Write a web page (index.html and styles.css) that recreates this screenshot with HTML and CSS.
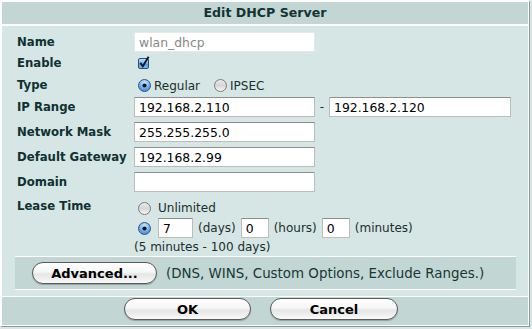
FILE: index.html
```html
<!DOCTYPE html>
<html>
<head>
<meta charset="utf-8">
<title>Edit DHCP Server</title>
<link rel="stylesheet" href="styles.css">
</head>
<body>
<div class="panel">
  <div class="head">Edit DHCP Server</div>
  <div class="main">
    <div class="form">
      <div class="lbl r-in">Name</div>
      <div class="ctl"><input class="field f-name" type="text" value="wlan_dhcp" disabled></div>

      <div class="lbl r-en">Enable</div>
      <div class="ctl ctl-en">
        <svg class="cb" width="12" height="13" viewBox="0 0 12 13">
          <defs><linearGradient id="cbg" x1="0" y1="0" x2="0" y2="1"><stop offset="0" stop-color="#c4e2fb"/><stop offset=".5" stop-color="#79b6ef"/><stop offset=".55" stop-color="#4f97e4"/><stop offset="1" stop-color="#7cc0f5"/></linearGradient></defs>
          <rect x="0.5" y="2.5" width="10" height="10" rx="1.5" fill="url(#cbg)" stroke="#2e4d78"/>
          <path d="M2.3 6.8 L4.8 10.3 L10.6 0.8" fill="none" stroke="#0e1a2a" stroke-width="1.9"/>
        </svg>
      </div>

      <div class="lbl r-ty">Type</div>
      <div class="ctl ctl-ty">
        <span class="opt">
          <svg class="rd" width="13" height="13" viewBox="0 0 13 13">
            <defs><radialGradient id="rsel" cx=".5" cy=".3" r=".7"><stop offset="0" stop-color="#d4ecff"/><stop offset=".6" stop-color="#6fb0ee"/><stop offset="1" stop-color="#3c86d9"/></radialGradient></defs>
            <circle cx="6.5" cy="6.5" r="6" fill="url(#rsel)" stroke="#3a5782"/>
            <circle cx="6.5" cy="6.5" r="2.1" fill="#111"/>
          </svg>Regular</span>
        <span class="opt">
          <svg class="rd" width="13" height="13" viewBox="0 0 13 13">
            <defs><linearGradient id="roff" x1="0" y1="0" x2="0" y2="1"><stop offset="0" stop-color="#ececec"/><stop offset=".5" stop-color="#d6d6d6"/><stop offset="1" stop-color="#fafafa"/></linearGradient></defs>
            <circle cx="6.5" cy="6.5" r="6" fill="url(#roff)" stroke="#7a7a7a"/>
          </svg>IPSEC</span>
      </div>

      <div class="lbl r-in">IP Range</div>
      <div class="ctl ctl-ip">
        <input class="field f-w" type="text" value="192.168.2.110">
        <span class="dash">-</span>
        <input class="field f-ip2" type="text" value="192.168.2.120">
      </div>

      <div class="lbl r-in">Network Mask</div>
      <div class="ctl"><input class="field f-w" type="text" value="255.255.255.0"></div>

      <div class="lbl r-in">Default Gateway</div>
      <div class="ctl"><input class="field f-w" type="text" value="192.168.2.99"></div>

      <div class="lbl r-in">Domain</div>
      <div class="ctl"><input class="field f-w" type="text" value=""></div>

      <div class="lbl r-lt">Lease Time</div>
      <div class="ctl ctl-lt">
        <span class="opt">
          <svg class="rd" width="13" height="13" viewBox="0 0 13 13">
            <defs><linearGradient id="roff2" x1="0" y1="0" x2="0" y2="1"><stop offset="0" stop-color="#ececec"/><stop offset=".5" stop-color="#d6d6d6"/><stop offset="1" stop-color="#fafafa"/></linearGradient></defs>
            <circle cx="6.5" cy="6.5" r="6" fill="url(#roff2)" stroke="#7a7a7a"/>
          </svg>Unlimited</span>
      </div>

      <div class="lbl"></div>
      <div class="ctl ctl-dur">
        <svg class="rd rd-dur" width="13" height="13" viewBox="0 0 13 13">
          <defs><radialGradient id="rsel2" cx=".5" cy=".3" r=".7"><stop offset="0" stop-color="#d4ecff"/><stop offset=".6" stop-color="#6fb0ee"/><stop offset="1" stop-color="#3c86d9"/></radialGradient></defs>
          <circle cx="6.5" cy="6.5" r="6" fill="url(#rsel2)" stroke="#3a5782"/>
          <circle cx="6.5" cy="6.5" r="2.1" fill="#111"/>
        </svg>
        <input class="field f-days" type="text" value="7">
        <span class="unit">(days)</span>
        <input class="field f-small" type="text" value="0">
        <span class="unit">(hours)</span>
        <input class="field f-small" type="text" value="0">
        <span class="unit">(minutes)</span>
      </div>

      <div class="lbl"></div>
      <div class="ctl note">(5 minutes - 100 days)</div>
    </div>

    <div class="adv">
      <button class="btn btn-adv" type="button">Advanced...</button>
      <span class="adv-text">(DNS, WINS, Custom Options, Exclude Ranges.)</span>
    </div>
  </div>
  <div class="foot">
    <button class="btn btn-ok" type="button">OK</button>
    <button class="btn btn-cancel" type="button">Cancel</button>
  </div>
</div>
</body>
</html>
```

FILE: styles.css
```css
html, body {
  margin: 0;
  padding: 0;
}
body {
  background: #d6e6e4;
  font-family: "DejaVu Sans", Verdana, sans-serif;
  color: #173636;
}
.panel {
  width: 526px;
  background: #ffffff;
  border-left: 2px solid #ffffff;
  border-top: 2px solid #ffffff;
  border-right: 1px solid #8f948f;
  border-bottom: 1px solid #8f948f;
  padding: 0 1px 1px 0;
}
.head {
  height: 22px;
  line-height: 22px;
  background: #c2d6d3;
  text-align: center;
  font-weight: bold;
  font-size: 12.6px;
  color: #123434;
}
.main {
  margin-top: 2px;
  height: 264px;
  padding: 6px 12px 0 13px;
  background: #d6e6e4;
}
.form {
  display: grid;
  grid-template-columns: 117px 1fr;
  grid-template-rows: 20px 22px 23px 25px 25px 25px 25px 21px 20px 18px;
  padding-left: 2px;
}
.lbl {
  font-weight: bold;
  font-size: 11.7px;
  color: #0f3131;
  white-space: nowrap;
}
.r-in { line-height: 20px; }
.r-en { line-height: 22px; }
.r-ty { line-height: 23px; }
.r-lt { line-height: 17px; padding-top: 1px; }
.ctl {
  display: flex;
  align-items: flex-start;
  font-size: 12px;
}
.ctl-en, .ctl-ty, .ctl-lt {
  align-items: center;
}
.ctl-en { padding-left: 4px; }
.ctl-ty { padding-left: 4px; gap: 14px; }
.ctl-lt { padding-left: 4px; padding-top: 1px; }
.opt {
  display: inline-flex;
  align-items: center;
  gap: 3px;
  color: #1a2e2e;
}
.ctl-lt .opt { gap: 7px; }
.cb { display: block; margin-top: -2px; }
.rd { display: block; flex: none; }
.field {
  box-sizing: border-box;
  height: 20px;
  margin: 0;
  padding: 0 4px;
  font-family: "DejaVu Sans", Verdana, sans-serif;
  font-size: 12.4px;
  color: #000;
  background: #fff;
  border: 1px solid #b9bdbb;
  border-top-color: #8c8f8d;
  outline: none;
}
.f-name {
  width: 181px;
  color: #888;
  border-color: #e4ecea;
}
.f-w { width: 181px; }
.f-ip2 { width: 182px; }
.dash {
  width: 14px;
  text-align: center;
  line-height: 20px;
}
.ctl-dur {
  align-items: center;
  gap: 5px;
  padding-left: 4px;
  color: #1a2e2e;
}
.rd-dur { margin-right: 2px; }
.f-days { width: 35px; }
.f-small { width: 28px; }
.note {
  line-height: 18px;
  color: #1a2e2e;
}
.adv {
  display: flex;
  align-items: center;
  gap: 9px;
  height: 32px;
  padding-left: 17px;
  background: #c2d6d3;
  border-top: 1px solid #ffffff;
  border-bottom: 1px solid #ffffff;
}
.adv-text {
  font-size: 13.4px;
  color: #173636;
}
.btn {
  box-sizing: border-box;
  height: 22px;
  margin: 0;
  padding: 0;
  font-family: "DejaVu Sans", Verdana, sans-serif;
  font-weight: bold;
  font-size: 13px;
  color: #000;
  border: 1px solid #5a5a5a;
  border-radius: 11px;
  background: linear-gradient(#ffffff 0%, #f6f6f6 45%, #e6e6e6 55%, #efefef 80%, #fbfbfb 100%);
  box-shadow: 0 1px 1px rgba(0,0,0,0.25);
}
.btn-adv { width: 125px; }
.btn-ok { width: 127px; }
.btn-cancel { width: 128px; }
.foot {
  margin-top: 1px;
  height: 27px;
  padding-top: 1px;
  padding-right: 8px;
  display: flex;
  justify-content: center;
  align-items: flex-start;
  gap: 19px;
  background: #c2d6d3;
}
```
